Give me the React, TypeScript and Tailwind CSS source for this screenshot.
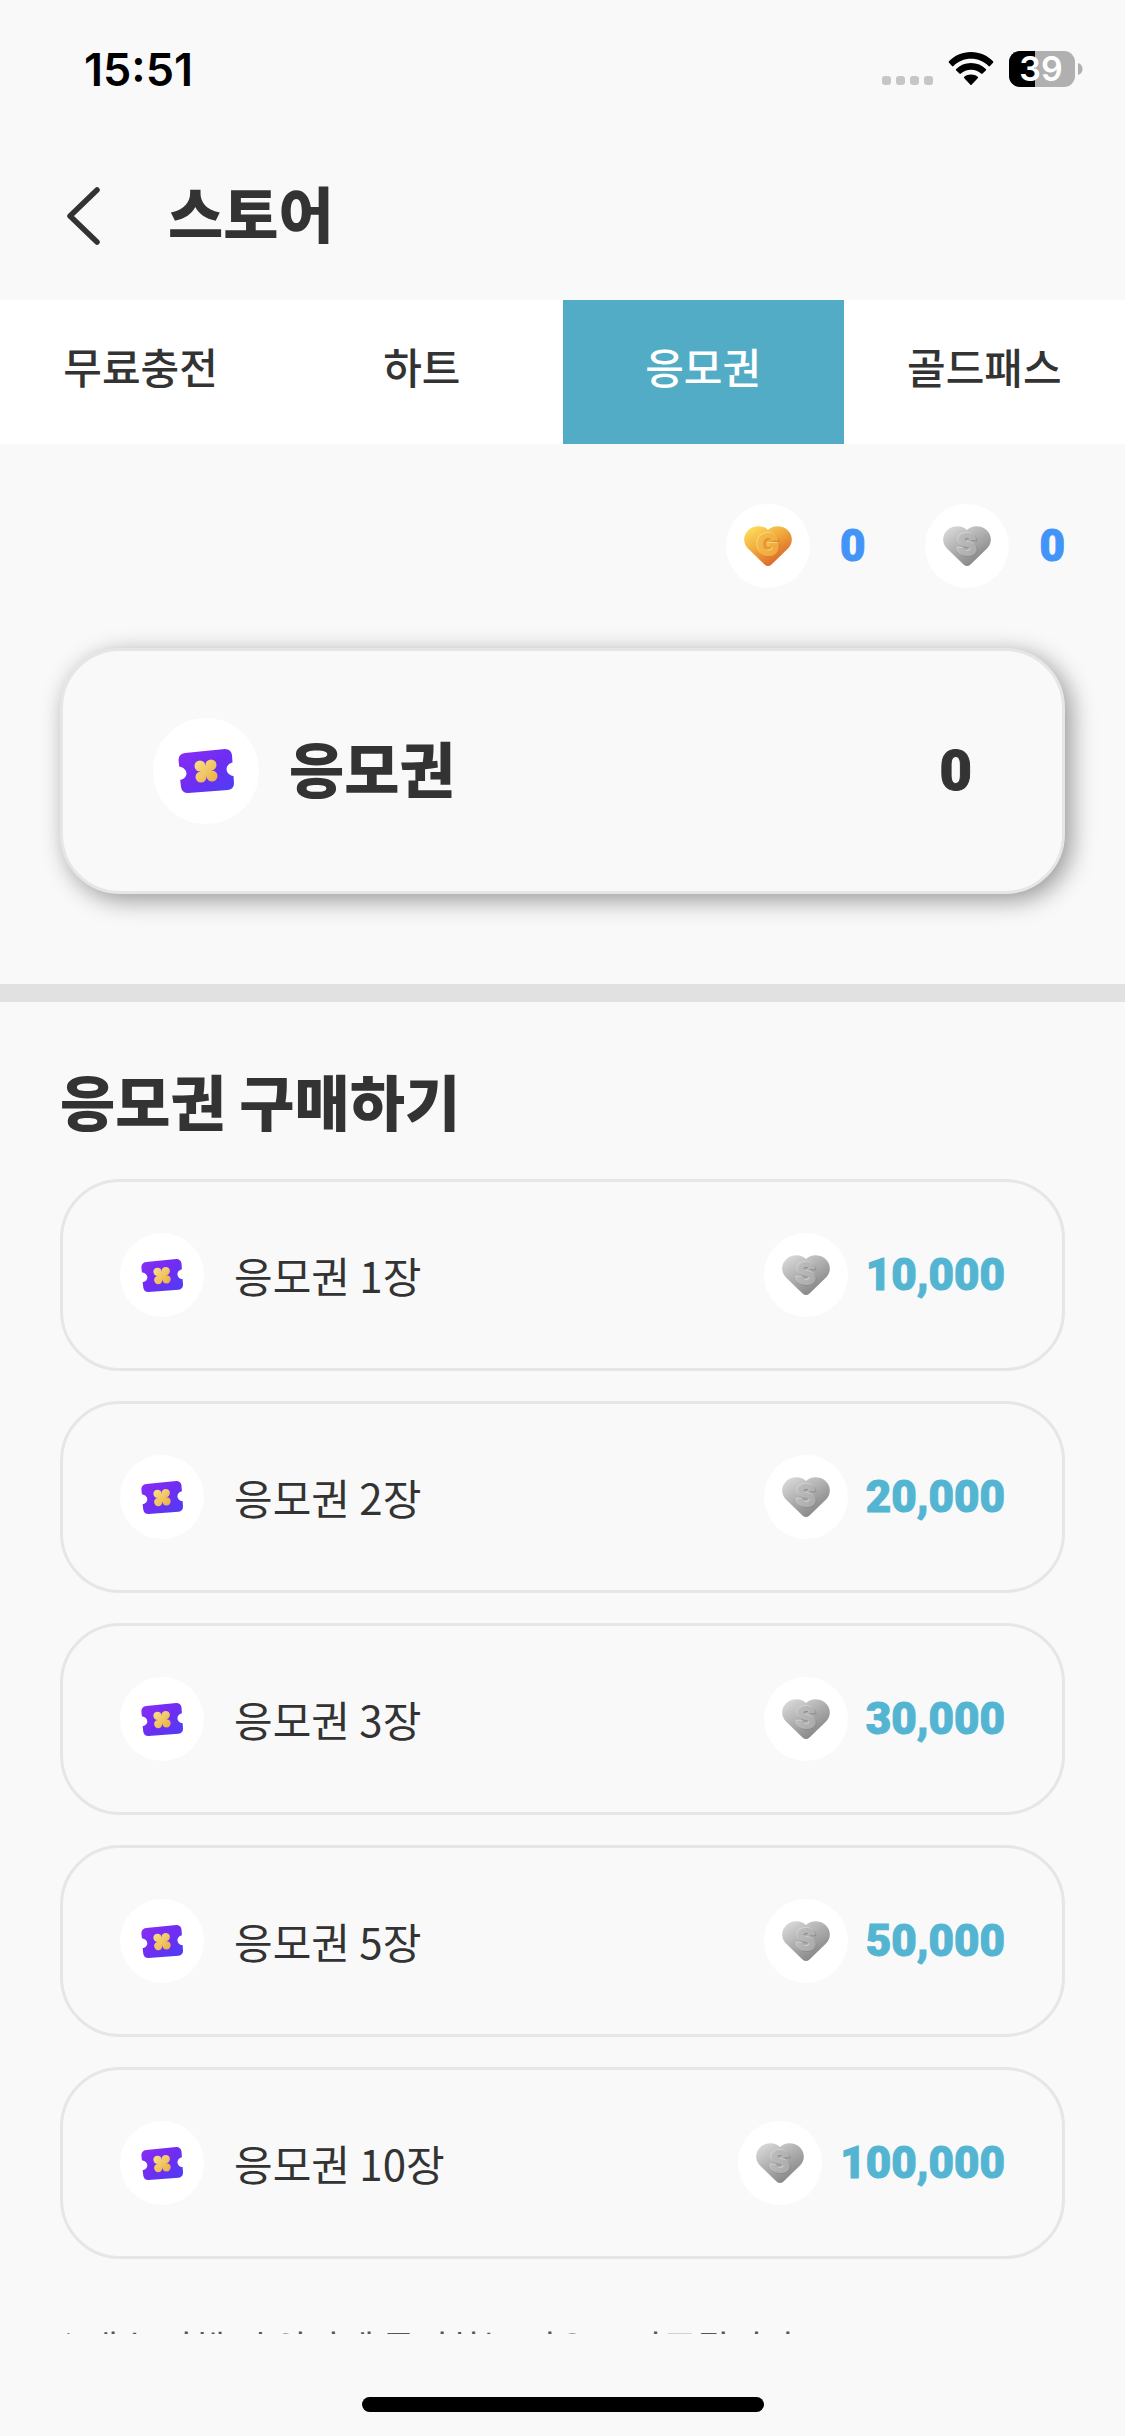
const tabs = ['무료충전', '하트', '응모권', '골드패스']

const tickets = [
  { count: 1, price: '10,000' },
  { count: 2, price: '20,000' },
  { count: 3, price: '30,000' },
  { count: 5, price: '50,000' },
  { count: 10, price: '100,000' },
]

const StatusBar = () => {
  return (
    <div className="flex items-center justify-between h-[138px] pl-[84px] pr-[42px] text-black font-['Inter',sans-serif]">
      <span className="text-[45px] leading-none font-semibold">15:51</span>
      <div className="flex items-center">
        <svg className="w-[52px] h-9 mr-[14px]" viewBox="0 0 52 36" fill="#c6c6c6">
          <rect x="0" y="25" width="9" height="9" rx="3" />
          <rect x="14" y="25" width="9" height="9" rx="3" />
          <rect x="28" y="25" width="9" height="9" rx="3" />
          <rect x="42" y="25" width="9" height="9" rx="3" />
        </svg>
        <svg className="w-[46px] h-9 mr-[15px]" viewBox="0 0 46 36">
          <path d="M23 1C32 1 39.500 4.500 45 10.300a1 1 0 0 1 0 1.500L42 15a1 1 0 0 1-1.500 0C36 10.500 30 7.800 23 7.800S10 10.500 5.500 15A1 1 0 0 1 4 15L1 11.800a1 1 0 0 1 0-1.500C6.500 4.500 14 1 23 1z" />
          <path d="M23 12c6 0 11 2.200 14.800 5.900a1 1 0 0 1 0 1.500l-3.200 3.200a1 1 0 0 1-1.500 0A14.500 14.500 0 0 0 23 18.700c-4 0-7.400 1.400-10.100 3.900a1 1 0 0 1-1.500 0l-3.200-3.200a1 1 0 0 1 0-1.500C12 14.200 17 12 23 12z" />
          <path d="M23 23.500c2.700 0 5 .9 6.700 2.300a1 1 0 0 1 0 1.500l-5.900 6.200a1 1 0 0 1-1.600 0l-5.900-6.200a1 1 0 0 1 0-1.500C18 24.400 20.300 23.500 23 23.500z" />
        </svg>
        <svg className="w-[74px] h-9" viewBox="0 0 74 36">
          <defs>
            <clipPath id="battery">
              <rect width="66" height="36" rx="11" />
            </clipPath>
          </defs>
          <g clipPath="url(#battery)">
            <rect width="66" height="36" fill="#b0b0b0" />
            <rect width="26" height="36" fill="#000" />
          </g>
          <path d="M69 12c3 1 4.500 3 4.500 6s-1.500 5-4.500 6z" fill="#b0b0b0" />
          <text x="32" y="30" textAnchor="middle" fontSize="34" fontWeight="600" fill="#fff">39</text>
        </svg>
      </div>
    </div>
  )
}

const HeartCoin = ({ kind }: { kind: 'gold' | 'silver' }) => {
  const gold = kind === 'gold'
  return (
    <span className="flex shrink-0 items-center justify-center size-[84px] rounded-full bg-white">
      <svg className="w-12 h-10" viewBox="0 0 48 40">
        <defs>
          <linearGradient id={`heart-${kind}`} x1="0.1" y1="0" x2="0.75" y2="0.9">
            <stop offset="0" stopColor={gold ? '#fde25c' : '#dcdcdc'} />
            <stop offset="0.5" stopColor={gold ? '#f0a83c' : '#b0b0b0'} />
            <stop offset="1" stopColor={gold ? '#db6328' : '#858585'} />
          </linearGradient>
          <linearGradient id={`letter-${kind}`} x1="0" y1="0" x2="1" y2="1">
            <stop offset="0" stopColor={gold ? '#f6c14c' : '#c2c2c2'} />
            <stop offset="1" stopColor={gold ? '#eda23c' : '#a6a6a6'} />
          </linearGradient>
        </defs>
        <path
          d="M24 4C20-.5 11-1.500 5 3.500-1 8.500-1.500 17 4 22.500L20.500 38.500q3.500 3 7 0L44 22.500C49.500 17 49 8.500 43 3.500 37-1.500 28-.5 24 4z"
          fill={`url(#heart-${kind})`}
        />
        <g fontFamily="Inter, sans-serif" fontSize="31" fontWeight="900" textAnchor="middle">
          <text x="25" y="31" fill={gold ? '#d98030' : '#8c8c8c'}>{gold ? 'G' : 'S'}</text>
          <text x="23" y="29" fill={gold ? '#fbd46c' : '#cfcfcf'}>{gold ? 'G' : 'S'}</text>
          <text x="24" y="30" fill={`url(#letter-${kind})`}>{gold ? 'G' : 'S'}</text>
        </g>
      </svg>
    </span>
  )
}

const TicketIcon = ({ large = false }: { large?: boolean }) => {
  return (
    <span className={`flex shrink-0 items-center justify-center rounded-full bg-white ${large ? 'size-[106px]' : 'size-[84px]'}`}>
      <svg className={large ? 'w-14 h-11' : 'w-[42px] h-[33px]'} viewBox="0 0 56 44">
        <defs>
          <linearGradient id="ticket" x1="0" y1="0" x2="1" y2="1">
            <stop offset="0" stopColor="#8a2cf5" />
            <stop offset="0.5" stopColor="#6f2df3" />
            <stop offset="1" stopColor="#4a3ff5" />
          </linearGradient>
          <linearGradient id="clover" gradientUnits="userSpaceOnUse" x1="17" y1="11" x2="39" y2="33">
            <stop offset="0" stopColor="#fbe08a" />
            <stop offset="1" stopColor="#e9ae43" />
          </linearGradient>
        </defs>
        <path
          d="M7 4L47 0q6 0 7 6l.5 7.500c-8 2-8 12 1 13.500L56 34q0 6-6 7L10 44q-6 0-7-6L2.200 31c9-2 8-12-1-13.500L.5 11Q.5 5 7 4z"
          fill="url(#ticket)"
        />
        <g fill="url(#clover)">
          <circle cx="22" cy="17" r="5.500" />
          <circle cx="33" cy="16" r="5.500" />
          <circle cx="23" cy="28" r="5.500" />
          <circle cx="34" cy="27" r="5.500" />
          <path d="M22 17l11-1 1 11-11 1z" />
        </g>
      </svg>
    </span>
  )
}

const Balance = ({ kind, amount }: { kind: 'gold' | 'silver'; amount: number }) => {
  return (
    <div className="flex items-center gap-[30px]">
      <HeartCoin kind={kind} />
      <span className="font-['Roboto',sans-serif] text-[44px] leading-none font-black text-[#4394f8] [-webkit-text-stroke:1px_#4394f8]">
        {amount}
      </span>
    </div>
  )
}

const TicketRow = ({ count, price }: { count: number; price: string }) => {
  return (
    <li>
      <button className="flex w-full items-center h-48 px-[57px] rounded-[60px] border-[3px] border-[#e6e6e6]">
        <TicketIcon />
        <span className="ml-[30px] text-[42px] leading-[60px]">응모권 {count}장</span>
        <span className="ml-auto flex items-center gap-[18px]">
          <HeartCoin kind="silver" />
          <span className="font-['Roboto',sans-serif] text-[44px] leading-none font-black text-[#53b5d1] [-webkit-text-stroke:1px_#53b5d1]">
            {price}
          </span>
        </span>
      </button>
    </li>
  )
}

export default function App() {
  return (
    <div className="flex flex-col h-screen overflow-hidden bg-[#f9f9f9] text-[#333333] font-['Noto_Sans_CJK_KR',sans-serif]">
      <StatusBar />
      <header className="flex items-center h-[162px] pb-[6px] pl-[60px]">
        <button aria-label="뒤로" className="flex items-center w-[108px] h-[60px]">
          <svg className="w-[42px] h-[60px]" viewBox="0 0 42 60" fill="none" stroke="#333" strokeWidth="5.500" strokeLinecap="round" strokeLinejoin="round">
            <path d="M37 4L10 30l27 26" />
          </svg>
        </button>
        <h1 className="pb-2 text-[60px] leading-[84px] font-black">스토어</h1>
      </header>

      <nav className="grid grid-cols-4 h-36 shrink-0 bg-white">
        {tabs.map((tab) => (
          <button
            key={tab}
            className={`pb-3 text-[42px] leading-[60px] font-medium ${tab === '응모권' ? 'bg-[#52acc6] text-white' : ''}`}
          >
            {tab}
          </button>
        ))}
      </nav>

      <main className="flex-1 min-h-0 overflow-hidden">
        <section className="px-[60px] pt-[60px] pb-[90px]">
          <div className="flex justify-end gap-[60px]">
            <Balance kind="gold" amount={0} />
            <Balance kind="silver" amount={0} />
          </div>
          <div className="mt-[60px] flex items-center h-[246px] px-[90px] rounded-[60px] border-[3px] border-[#e6e6e6] bg-[#f9f9f9] shadow-[6px_6px_24px_rgba(0,0,0,0.4)]">
            <TicketIcon large />
            <span className="ml-[30px] pb-2 text-[60px] leading-[84px] font-black">응모권</span>
            <span className="ml-auto font-['Roboto',sans-serif] text-[56px] leading-none font-black [-webkit-text-stroke:1px_#333333]">
              0
            </span>
          </div>
        </section>

        <div className="h-[18px] bg-[#e1e1e1]" />

        <section className="px-[60px] pt-14">
          <h2 className="text-[60px] leading-[84px] font-black">응모권 구매하기</h2>
          <ul className="mt-[37px] flex flex-col gap-[30px]">
            {tickets.map((ticket) => (
              <TicketRow key={ticket.count} count={ticket.count} price={ticket.price} />
            ))}
          </ul>
          <p className="mt-[60px] text-[36px] leading-[54px] text-[#555555]">
            * 매수 진행 시 약관에 동의하는 것으로 간주됩니다.
          </p>
        </section>
      </main>

      <footer className="flex h-[102px] shrink-0 items-end justify-center pb-6">
        <div className="h-[15px] w-[402px] rounded-full bg-black" />
      </footer>
    </div>
  )
}
